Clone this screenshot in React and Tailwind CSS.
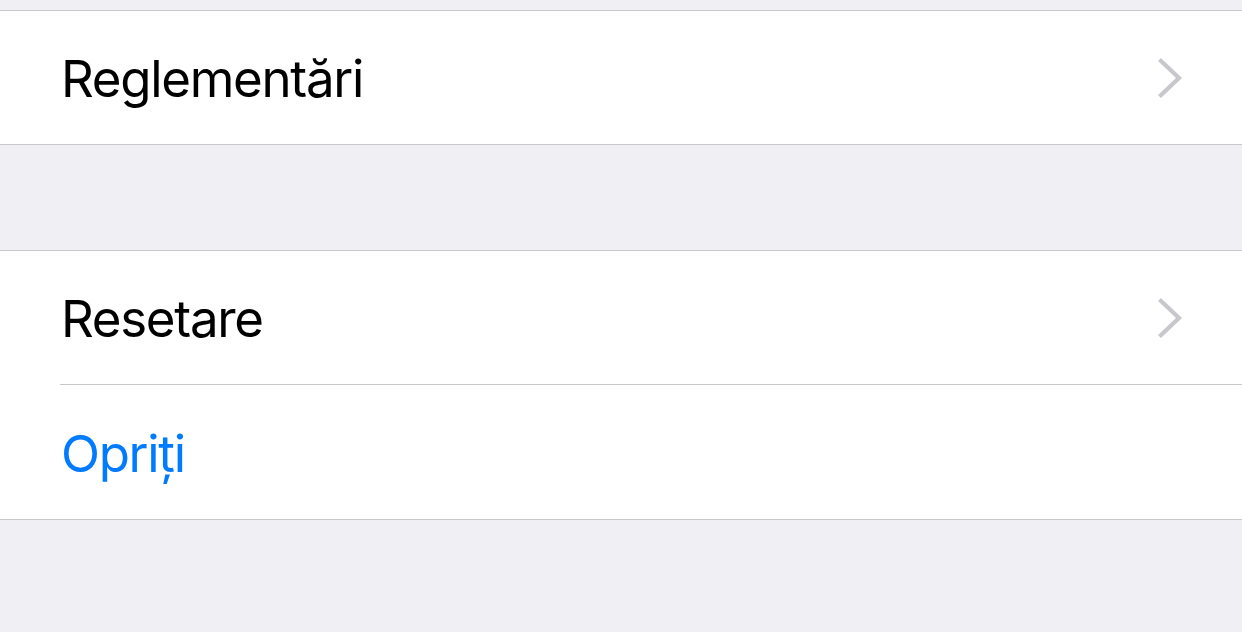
import React from "react";

function Chevron() {
  return (
    <svg width="26" height="40" viewBox="0 0 26 40" className="shrink-0">
      <path d="M3 3 L21 20 L3 37" fill="none" stroke="#c7c7cc" strokeWidth="4.2" strokeLinecap="square" strokeLinejoin="miter" />
    </svg>
  );
}

function Row({ label, blue, chevron, height }) {
  return (
    <div className={`flex items-center justify-between pl-[61px] pr-[58px] bg-white ${height}`}>
      <span className={`text-[51px] leading-none tracking-[-1.3px] pt-[2px] ${blue ? "text-[#007aff]" : "text-black"}`}>{label}</span>
      {chevron && <Chevron />}
    </div>
  );
}

export default function App() {
  return (
    <div className="w-[1242px] h-[632px] overflow-hidden bg-[#efeff4]" style={{ fontFamily: "Inter, 'Noto Sans', sans-serif" }}>
      <div className="h-[10px]" />
      <div className="border-y border-[#c8c7cc]">
        <Row label="Reglementări" chevron height="h-[133px]" />
      </div>
      <div className="h-[105px]" />
      <div className="border-y border-[#c8c7cc] bg-white">
        <Row label="Resetare" chevron height="h-[133px]" />
        <div className="ml-[60px] h-px bg-[#c8c7cc]" />
        <Row label="Opriți" blue height="h-[134px]" />
      </div>
    </div>
  );
}
